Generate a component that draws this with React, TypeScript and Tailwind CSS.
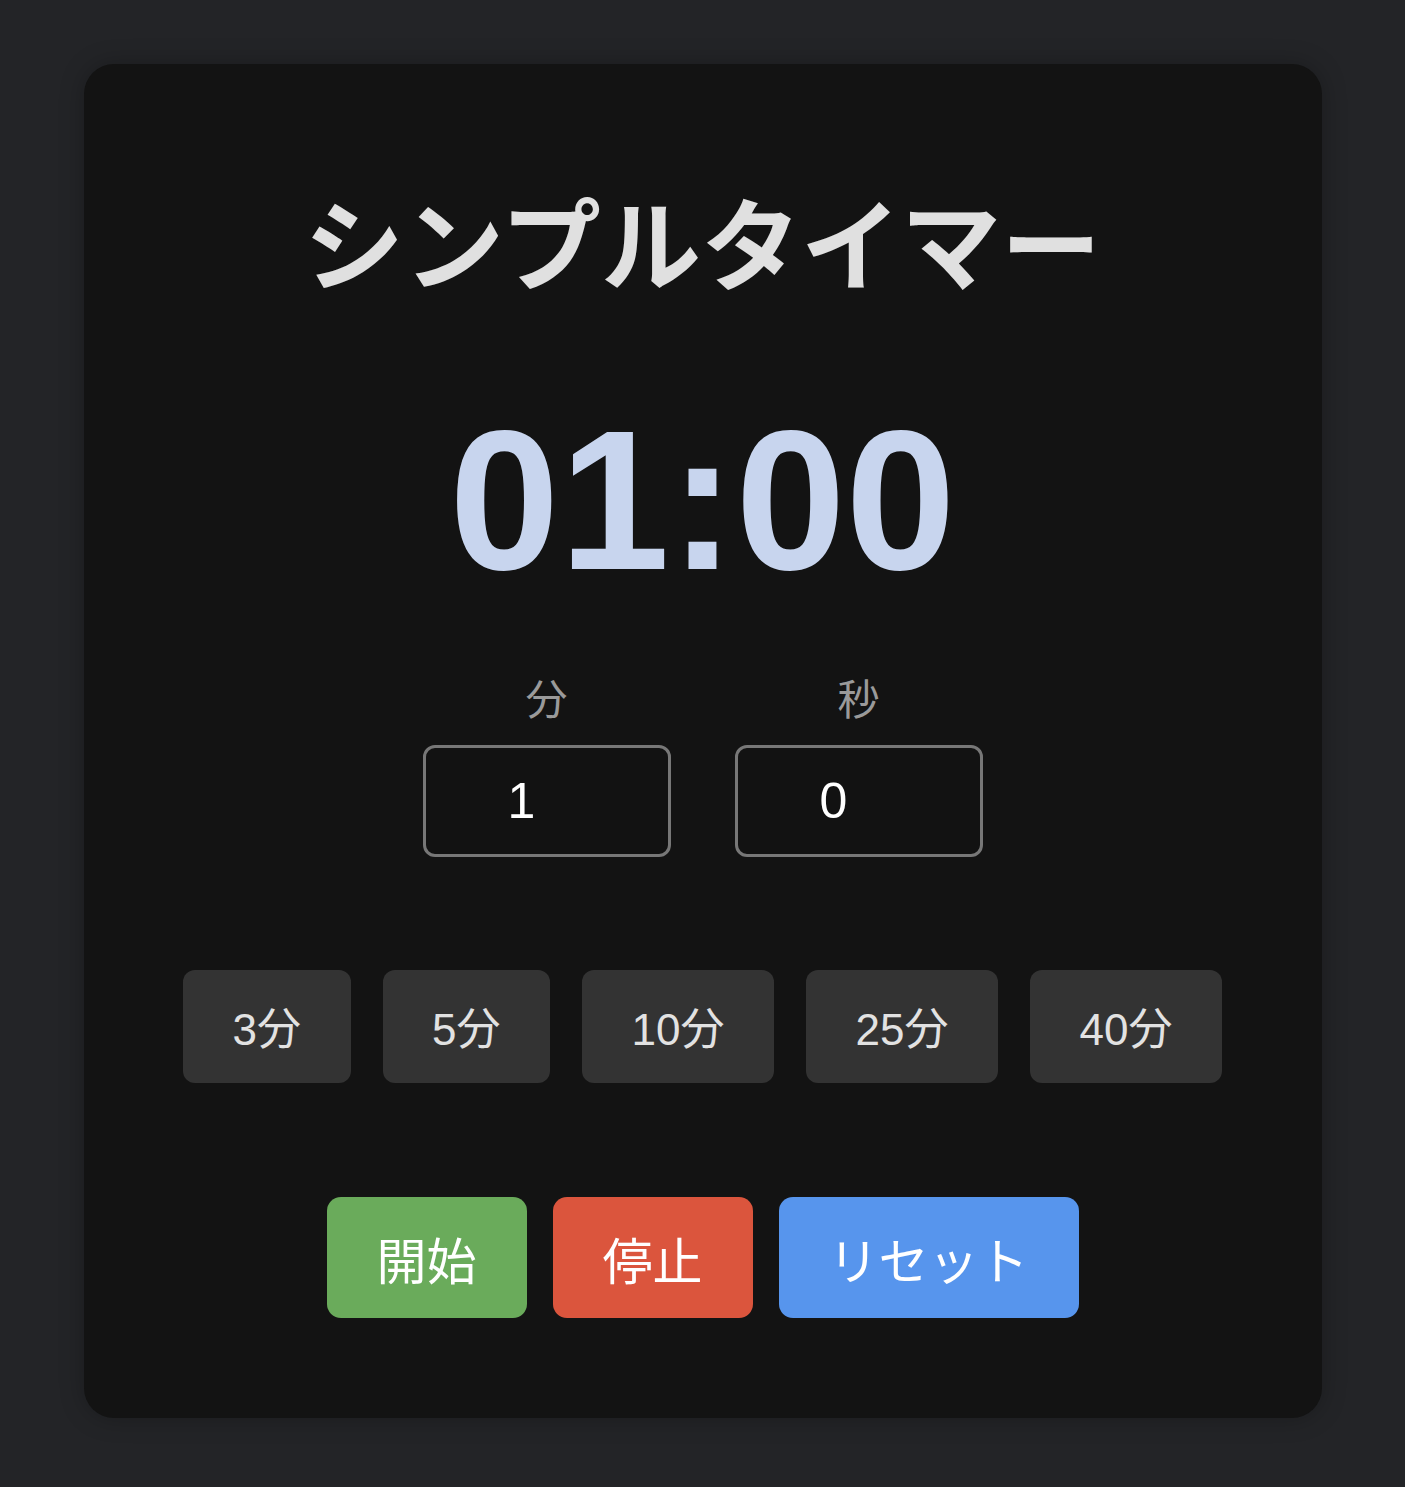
import React from "react";

export default function App() {
  const presets = ["3分", "5分", "10分", "25分", "40分"];
  const fields: [string, string][] = [
    ["分", "1"],
    ["秒", "0"],
  ];
  return (
    <div className="min-h-[1487px] w-full bg-[#232427] pt-[64px] pb-[69px]">
      <div className="mx-auto flex w-[1238px] flex-col items-center rounded-[30px] bg-[#131313] pt-[116px] pb-[100px] shadow-[0_0_24px_rgba(0,0,0,0.25)]">
        <h1 className="font-['Noto_Sans_CJK_JP','Noto_Sans',sans-serif] text-[100px] font-bold leading-[120px] text-[#e0e0e0]">
          シンプルタイマー
        </h1>

        <div className="mt-[101px] font-['Liberation_Sans',Arial,sans-serif] text-[198px] font-bold leading-[200px] text-[#c8d5ee]">
          01:00
        </div>

        <div className="mt-[75px] flex gap-[64px]">
          {fields.map(([label, val]) => (
            <div key={label} className="flex flex-col items-center">
              <div className="font-['Noto_Sans_CJK_JP','Noto_Sans',sans-serif] text-[42px] leading-[42px] text-[#9a9a9a]">
                {label}
              </div>
              <div className="mt-[27px] flex h-[112px] w-[248px] items-center justify-center rounded-[12px] border-[3px] border-[#777777] bg-[#121212] pr-[50px] font-['Liberation_Sans',Arial,sans-serif] text-[50px] text-white">
                {val}
              </div>
            </div>
          ))}
        </div>

        <div className="mt-[113px] flex gap-[32px]">
          {presets.map((p) => (
            <button
              key={p}
              className="flex h-[113px] items-center justify-center rounded-[12px] bg-[#333333] px-[49.5px] pt-[6px] font-['Liberation_Sans','Noto_Sans_CJK_JP',sans-serif] text-[44px] leading-none text-[#e2e2e2]"
            >
              {p}
            </button>
          ))}
        </div>

        <div className="mt-[114px] flex gap-[26px]">
          <button className="flex h-[121px] items-center justify-center rounded-[14px] bg-[#6aab5b] px-[50px] font-['Noto_Sans_CJK_JP','Noto_Sans',sans-serif] text-[50px] leading-none text-white">
            開始
          </button>
          <button className="flex h-[121px] items-center justify-center rounded-[14px] bg-[#db553d] px-[50px] font-['Noto_Sans_CJK_JP','Noto_Sans',sans-serif] text-[50px] leading-none text-white">
            停止
          </button>
          <button className="flex h-[121px] items-center justify-center rounded-[14px] bg-[#5795ed] px-[50px] font-['Noto_Sans_CJK_JP','Noto_Sans',sans-serif] text-[50px] leading-none text-white">
            リセット
          </button>
        </div>
      </div>
    </div>
  );
}
